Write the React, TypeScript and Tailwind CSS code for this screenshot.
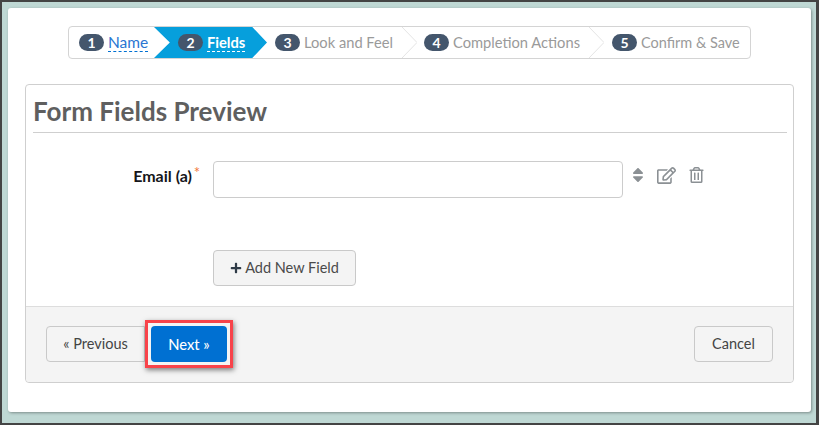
import React from "react";
import { FaSort, FaRegEdit, FaRegTrashAlt, FaPlus } from "react-icons/fa";

const Badge = ({ n }: { n: number }) => (
  <span className="flex h-[17px] w-[25px] shrink-0 items-center justify-center rounded-full bg-[#44566c] text-[14px] font-bold leading-none text-white">
    {n}
  </span>
);

const Chevron = () => (
  <svg width="15" height="31" viewBox="0 0 15 31" className="shrink-0">
    <path d="M0 0 L15 15.5 L0 31" fill="none" stroke="#e4e4e4" strokeWidth="1" />
  </svg>
);

const App = () => {
  return (
    <div className="h-[425px] w-[819px] overflow-hidden border-b-2 border-l-2 border-r-[3px] border-t-2 border-[#444444] bg-[#bfd8d4] pb-[10px] pl-[6px] pr-[5px] pt-[6px] font-['Lato',sans-serif]">
      <div className="flex h-[404px] w-[803px] flex-col rounded-[3px] bg-white px-[17px] pt-[18px] shadow-[1px_1px_3px_rgba(0,0,0,0.35)]">
        {/* wizard steps */}
        <div className="ml-[43px] flex h-[33px] w-[683px] items-stretch rounded-[4px] border border-[#d4d4d4] text-[14.7px]">
          <div className="flex w-[85px] items-center gap-[4px] pl-[10px]">
            <Badge n={1} />
            <span className="border-b border-dashed border-[#0070d2] text-[15.5px] leading-[18px] text-[#2a76d2]">Name</span>
          </div>
          <div className="flex w-[113px] items-center gap-[4px] bg-[#069fdc] pl-[24px] [clip-path:polygon(0_0,87%_0,100%_50%,87%_100%,0_100%,14%_50%)]">
            <Badge n={2} />
            <span className="border-b border-dashed border-white font-bold leading-[18px] text-white">Fields</span>
          </div>
          <div className="flex w-[135px] items-center gap-[4px] pl-[8px] text-[#9a9a9a]">
            <Badge n={3} />
            <span>Look and Feel</span>
          </div>
          <Chevron />
          <div className="flex w-[172px] items-center gap-[4px] pl-[7px] text-[#9a9a9a]">
            <Badge n={4} />
            <span>Completion Actions</span>
          </div>
          <Chevron />
          <div className="flex flex-1 items-center gap-[4px] pl-[8px] text-[#9a9a9a]">
            <Badge n={5} />
            <span className="text-[14.5px]">Confirm &amp; Save</span>
          </div>
        </div>

        {/* form panel */}
        <div className="mt-[25px] flex h-[299px] w-[769px] flex-col rounded-[4px] border border-[#cfcfcf]">
          <div className="ml-[7px] mr-[6px] flex h-[48px] items-end border-b border-[#cfcfcf] pb-[5px]">
            <h1 className="text-[26px] font-bold leading-[32px] text-[#5f5f5f]">Form Fields Preview</h1>
          </div>
          <div className="flex flex-1 flex-col pl-[187px] pt-[28px]">
            <div className="flex items-start">
              <div className="relative -ml-[100px] w-[100px] pr-[21px] pt-[5px] text-right text-[16px] font-bold leading-[19px] text-[#16161a]">
                Email (a)
                <span className="absolute right-[13px] top-[2px] text-[15px] font-normal text-[#f2793b]">*</span>
              </div>
              <div className="h-[37px] w-[410px] rounded-[4px] border border-[#cccccc] bg-white"></div>
              <div className="flex items-center pt-[5px] text-[#8b9094]">
                <FaSort className="ml-[9px] h-[18px] w-[12px]" />
                <FaRegEdit className="ml-[13px] h-[17px] w-[19px]" />
                <FaRegTrashAlt className="ml-[13px] h-[16px] w-[15px]" />
              </div>
            </div>
            <button className="mt-[52px] flex h-[36px] w-[143px] items-center justify-center gap-[3px] rounded-[4px] border border-[#c9c9c9] bg-[#f4f4f4] text-[14.5px] text-[#4a4a4a]">
              <FaPlus className="h-[12px] w-[12px] text-[#2f3b47]" />
              Add New Field
            </button>
          </div>
          <div className="flex h-[76px] items-start justify-between rounded-b-[4px] border-t border-[#dddddd] bg-[#f4f4f4] px-[20px] pt-[19px]">
            <div className="flex items-center">
              <button className="h-[36px] w-[99px] rounded-l-[4px] border border-[#c9c9c9] bg-[#f4f4f4] text-[14.5px] text-[#444444]">
                « Previous
              </button>
              <div className="-my-[6px] border-[3px] border-[#f8434a] p-[3px] shadow-[1px_2px_5px_rgba(0,0,0,0.5)]">
                <button className="block h-[36px] w-[76px] rounded-[4px] bg-[#0070d2] text-[14.7px] font-medium text-white">
                  Next »
                </button>
              </div>
            </div>
            <button className="h-[36px] w-[79px] rounded-[4px] border border-[#c9c9c9] bg-[#f4f4f4] text-[14.5px] text-[#444444]">
              Cancel
            </button>
          </div>
        </div>
      </div>
    </div>
  );
};

export default App;
